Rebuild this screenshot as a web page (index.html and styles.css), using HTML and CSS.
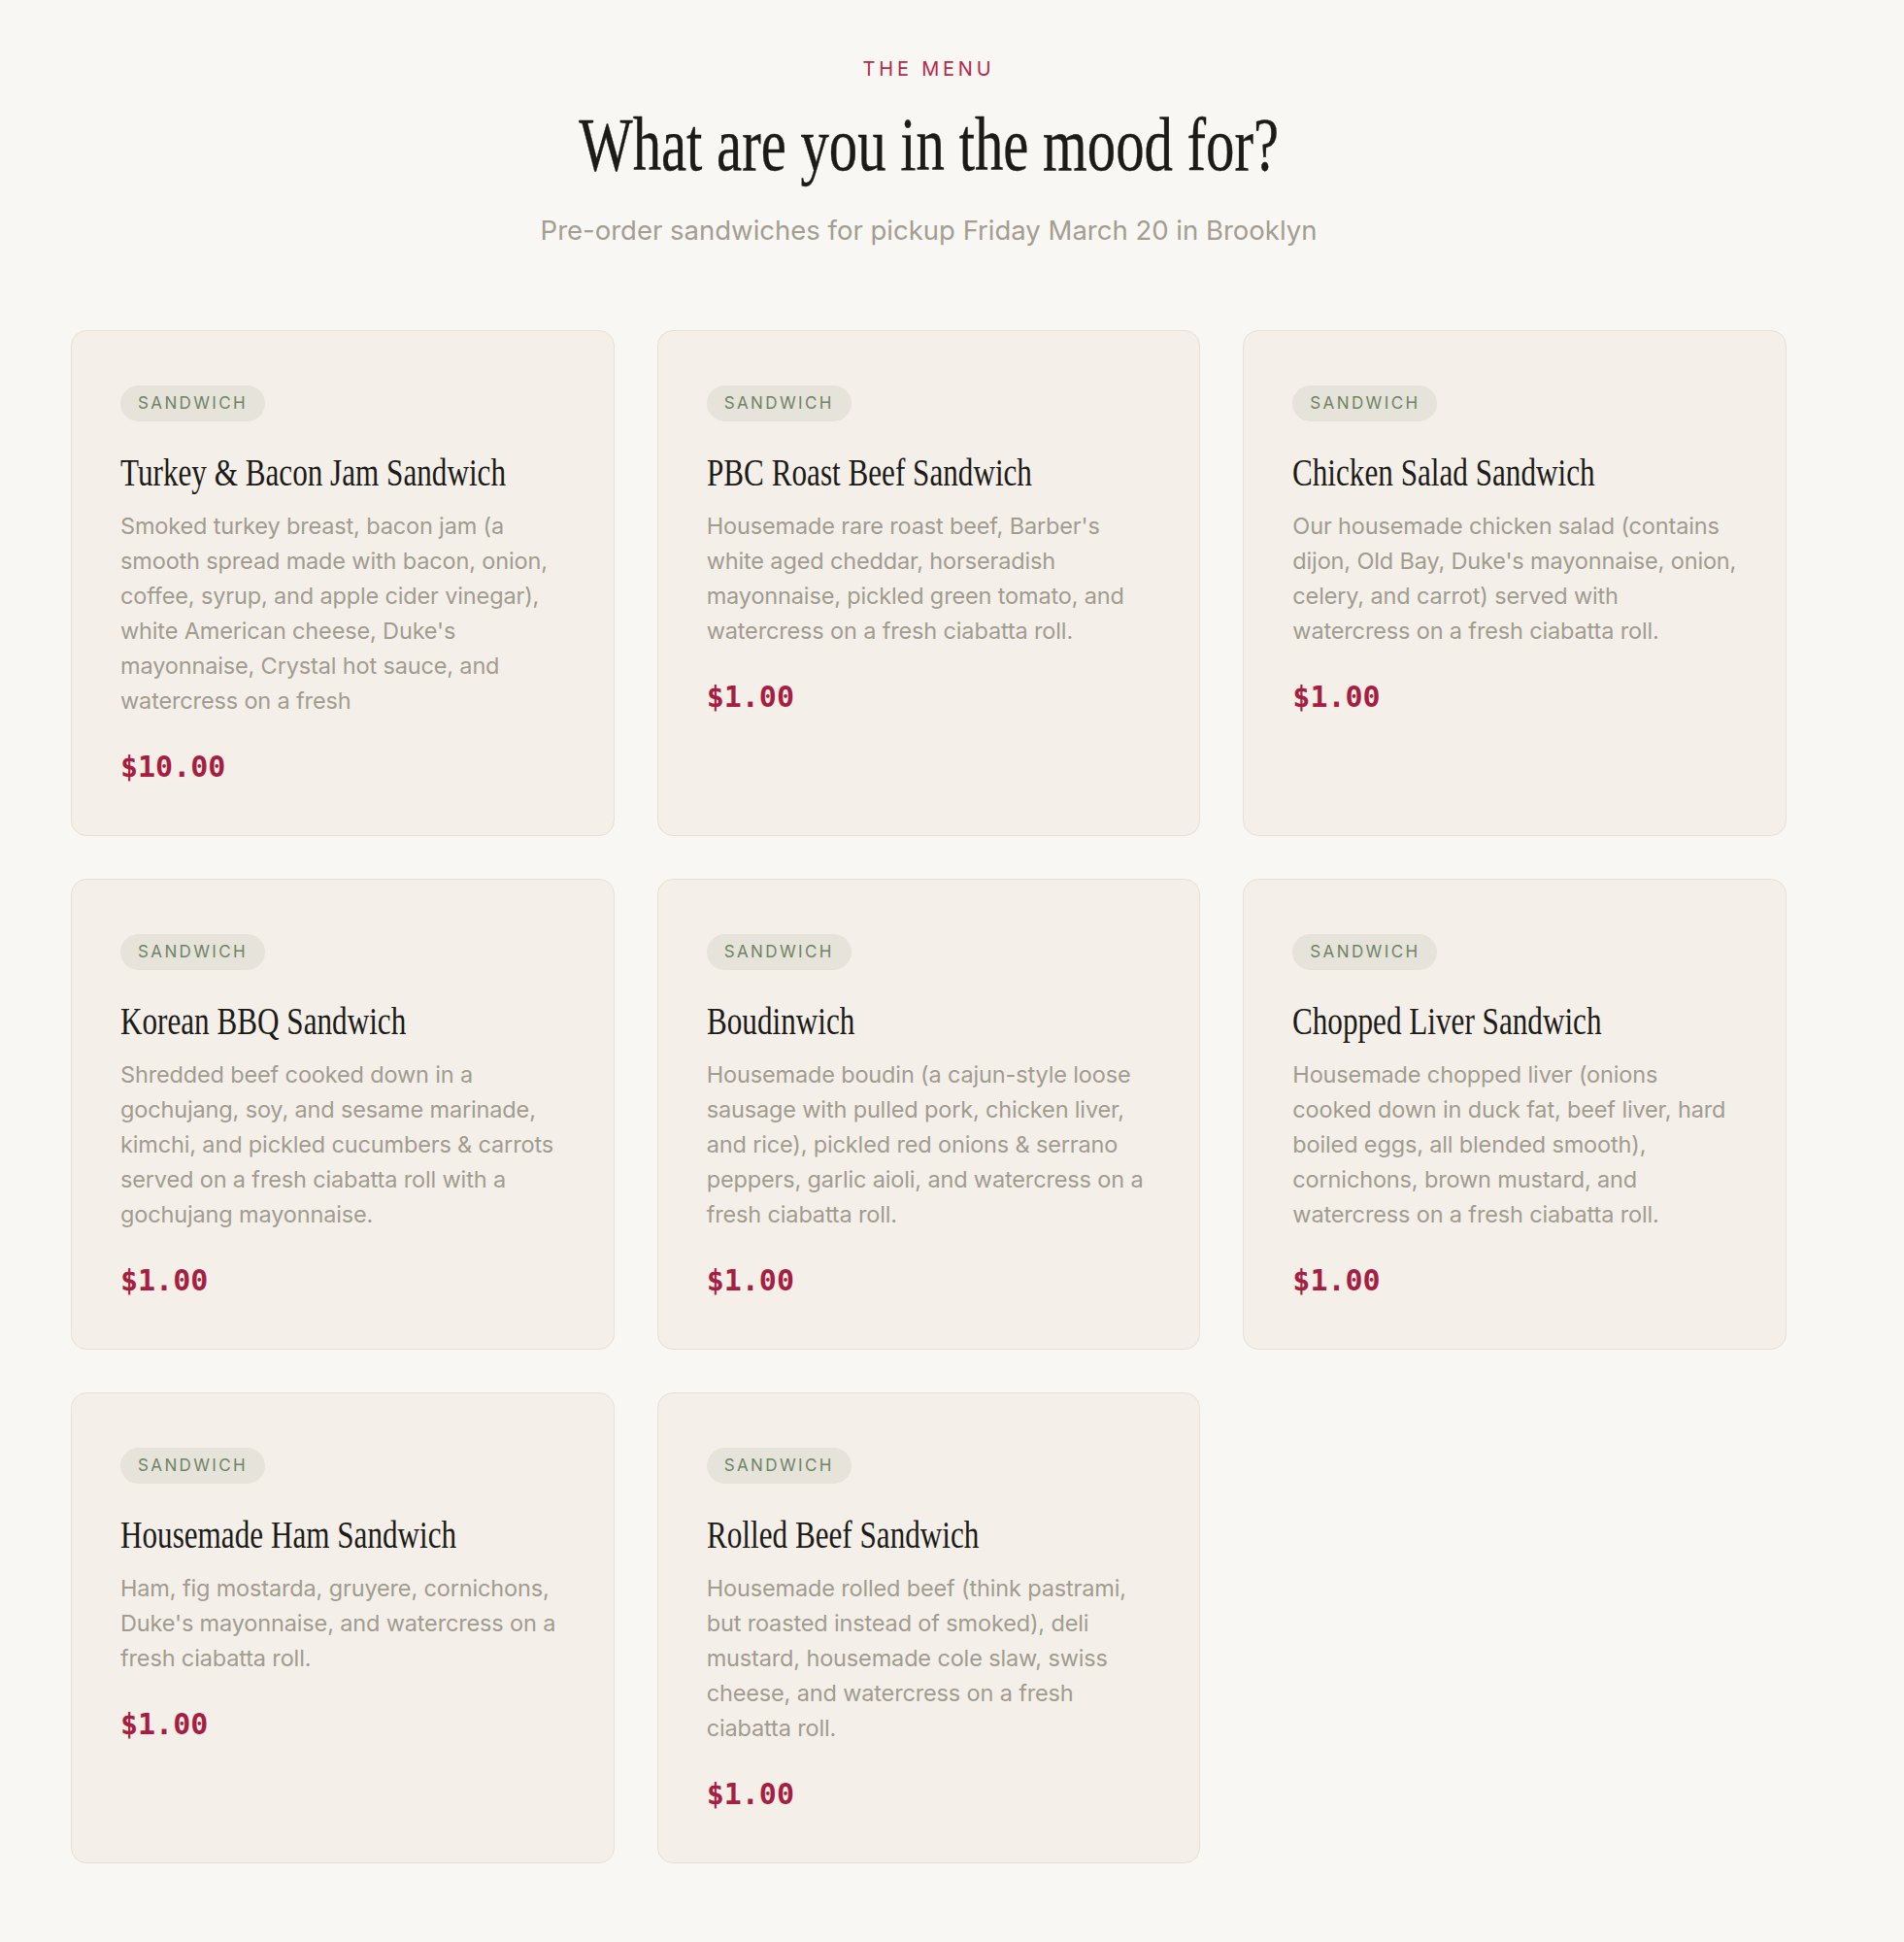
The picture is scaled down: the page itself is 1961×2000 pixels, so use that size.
FILE: index.html
```html
<!DOCTYPE html>
<html lang="en">
<head>
<meta charset="utf-8">
<title>The Menu</title>
<link rel="stylesheet" href="styles.css">
</head>
<body>
<main class="page">
  <header class="intro">
    <p class="eyebrow">THE MENU</p>
    <h1 class="headline"><span class="condensed">What are you in the mood for?</span></h1>
    <p class="subtitle">Pre-order sandwiches for pickup Friday March 20 in Brooklyn</p>
  </header>

  <section class="grid">
    <article class="card">
      <span class="badge">Sandwich</span>
      <h2 class="card-title"><span class="condensed">Turkey &amp; Bacon Jam Sandwich</span></h2>
      <p class="card-desc">Smoked turkey breast, bacon jam (a smooth spread made with bacon, onion, coffee, syrup, and apple cider vinegar), white American cheese, Duke's mayonnaise, Crystal hot sauce, and watercress on a fresh</p>
      <p class="price">$10.00</p>
    </article>

    <article class="card">
      <span class="badge">Sandwich</span>
      <h2 class="card-title"><span class="condensed">PBC Roast Beef Sandwich</span></h2>
      <p class="card-desc">Housemade rare roast beef, Barber's white aged cheddar, horseradish mayonnaise, pickled green tomato, and watercress on a fresh ciabatta roll.</p>
      <p class="price">$1.00</p>
    </article>

    <article class="card">
      <span class="badge">Sandwich</span>
      <h2 class="card-title"><span class="condensed">Chicken Salad Sandwich</span></h2>
      <p class="card-desc">Our housemade chicken salad (contains dijon, Old Bay, Duke's mayonnaise, onion, celery, and carrot) served with watercress on a fresh ciabatta roll.</p>
      <p class="price">$1.00</p>
    </article>

    <article class="card">
      <span class="badge">Sandwich</span>
      <h2 class="card-title"><span class="condensed">Korean BBQ Sandwich</span></h2>
      <p class="card-desc">Shredded beef cooked down in a gochujang, soy, and sesame marinade, kimchi, and pickled cucumbers &amp; carrots served on a fresh ciabatta roll with a gochujang mayonnaise.</p>
      <p class="price">$1.00</p>
    </article>

    <article class="card">
      <span class="badge">Sandwich</span>
      <h2 class="card-title"><span class="condensed">Boudinwich</span></h2>
      <p class="card-desc">Housemade boudin (a cajun-style loose sausage with pulled pork, chicken liver, and rice), pickled red onions &amp; serrano peppers, garlic aioli, and watercress on a fresh ciabatta roll.</p>
      <p class="price">$1.00</p>
    </article>

    <article class="card">
      <span class="badge">Sandwich</span>
      <h2 class="card-title"><span class="condensed">Chopped Liver Sandwich</span></h2>
      <p class="card-desc">Housemade chopped liver (onions cooked down in duck fat, beef liver, hard boiled eggs, all blended smooth), cornichons, brown mustard, and watercress on a fresh ciabatta roll.</p>
      <p class="price">$1.00</p>
    </article>

    <article class="card">
      <span class="badge">Sandwich</span>
      <h2 class="card-title"><span class="condensed">Housemade Ham Sandwich</span></h2>
      <p class="card-desc">Ham, fig mostarda, gruyere, cornichons, Duke's mayonnaise, and watercress on a fresh ciabatta roll.</p>
      <p class="price">$1.00</p>
    </article>

    <article class="card">
      <span class="badge">Sandwich</span>
      <h2 class="card-title"><span class="condensed">Rolled Beef Sandwich</span></h2>
      <p class="card-desc">Housemade rolled beef (think pastrami, but roasted instead of smoked), deli mustard, housemade cole slaw, swiss cheese, and watercress on a fresh ciabatta roll.</p>
      <p class="price">$1.00</p>
    </article>
  </section>
</main>
</body>
</html>
```
FILE: styles.css
```css
* {
  box-sizing: border-box;
}

html, body {
  margin: 0;
  padding: 0;
  background: #f9f7f3;
}

body {
  font-family: Inter, "Noto Sans", sans-serif;
  color: #1f1d1a;
}

.page {
  width: 1767px;
  margin-left: 73px;
  padding: 61px 0 80px;
}

.intro {
  text-align: center;
}

.eyebrow {
  margin: 0;
  font-size: 20px;
  line-height: 21px;
  letter-spacing: 0.19em;
  color: #b32a4c;
  font-weight: 400;
}

.condensed {
  display: inline-block;
  white-space: nowrap;
  transform: scaleX(0.76);
}

.headline {
  margin: 28px 0 0;
  font-family: "Liberation Serif", "Times New Roman", serif;
  font-weight: 400;
  font-size: 78px;
  line-height: 77px;
  color: #1c1b18;
  -webkit-text-stroke: 0.4px #1c1b18;
}

.headline .condensed {
  transform: scaleX(0.753);
  transform-origin: center;
}

.subtitle {
  margin: 33px 0 0;
  font-size: 27.5px;
  line-height: 34px;
  color: #a39d92;
}

.grid {
  margin-top: 86px;
  display: grid;
  grid-template-columns: repeat(3, minmax(0, 1fr));
  gap: 44px;
}

.card {
  min-width: 0;
  background: #f4f0e9;
  border: 1px solid #e6e0d6;
  border-radius: 16px;
  padding: 56px 50px 55px;
  display: flex;
  flex-direction: column;
  align-items: flex-start;
}

.badge {
  display: inline-block;
  height: 37px;
  line-height: 37px;
  padding: 0 18px;
  border-radius: 999px;
  background: #e6e3da;
  color: #6f8466;
  font-size: 17px;
  letter-spacing: 0.14em;
  text-transform: uppercase;
}

.card-title {
  margin: 28px 0 0;
  font-family: "Liberation Serif", "Times New Roman", serif;
  font-weight: 400;
  font-size: 41px;
  line-height: 49px;
  color: #1c1b18;
}

.card-title .condensed {
  transform-origin: left center;
}

.card-desc {
  margin: 13px 0 0;
  font-size: 23.5px;
  line-height: 36px;
  letter-spacing: -0.15px;
  color: #a19b90;
}

.price {
  margin: 35px 0 0;
  font-family: "DejaVu Sans Mono", "Liberation Mono", monospace;
  font-weight: 700;
  font-size: 30px;
  line-height: 30px;
  color: #a61e42;
}
```
